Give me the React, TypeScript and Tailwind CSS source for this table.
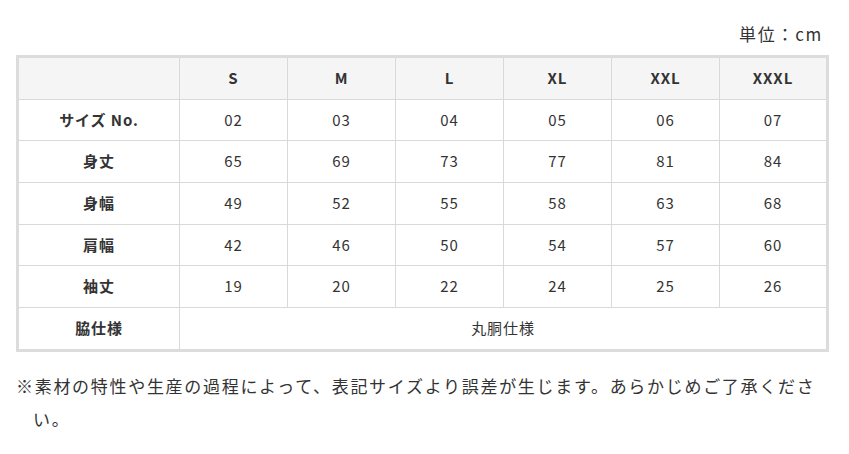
const sizes = ['S', 'M', 'L', 'XL', 'XXL', 'XXXL'];

const rows = [
  { label: 'サイズ No.', values: ['02', '03', '04', '05', '06', '07'] },
  { label: '身丈', values: ['65', '69', '73', '77', '81', '84'] },
  { label: '身幅', values: ['49', '52', '55', '58', '63', '68'] },
  { label: '肩幅', values: ['42', '46', '50', '54', '57', '60'] },
  { label: '袖丈', values: ['19', '20', '22', '24', '25', '26'] },
];

export default function App() {
  return (
    <div
      className="w-[849px] h-[454px] bg-white pl-[16px] pr-[20px] text-[#333]"
      style={{ fontFamily: '"Noto Sans CJK JP", "Noto Sans", sans-serif' }}
    >
      <div className="pt-[22px] h-[46px] pr-[6px] text-right text-[17px] leading-[24px] tracking-[0.1em]">
        単位：cm
      </div>
      <div className="mt-[9px] border-[3px] border-[#dcdcdc]">
        <div className="grid grid-cols-[161px_repeat(5,108px)_1fr] grid-rows-[42px_41px_42px_42px_41px_42px_41px] text-[15px] tracking-[0.06em]">
          {/* header */}
          <div className="bg-[#f5f5f5] border-r border-b border-[#d9d9d9]" />
          {sizes.map((s, i) => (
            <div
              key={s}
              className={`bg-[#f5f5f5] border-b border-[#d9d9d9] flex items-center justify-center font-semibold ${
                i < sizes.length - 1 ? 'border-r' : ''
              }`}
            >
              {s}
            </div>
          ))}
          {rows.map((r) => (
            <Row key={r.label} label={r.label} values={r.values} />
          ))}
          {/* last row */}
          <div className="border-r border-[#d9d9d9] flex items-center justify-center font-semibold">
            脇仕様
          </div>
          <div className="col-span-6 flex items-center justify-center">丸胴仕様</div>
        </div>
      </div>
      <p className="mt-[17px] pl-[1em] indent-[-1em] text-[17px] leading-[33px] tracking-[0.1em]">
        ※素材の特性や生産の過程によって、表記サイズより誤差が生じます。あらかじめご了承ください。
      </p>
    </div>
  );
}

function Row({ label, values }: { label: string; values: string[] }) {
  return (
    <>
      <div className="border-r border-b border-[#d9d9d9] flex items-center justify-center font-semibold">
        {label}
      </div>
      {values.map((v, i) => (
        <div
          key={i}
          className={`border-b border-[#d9d9d9] flex items-center justify-center ${
            i < values.length - 1 ? 'border-r' : ''
          }`}
        >
          {v}
        </div>
      ))}
    </>
  );
}
